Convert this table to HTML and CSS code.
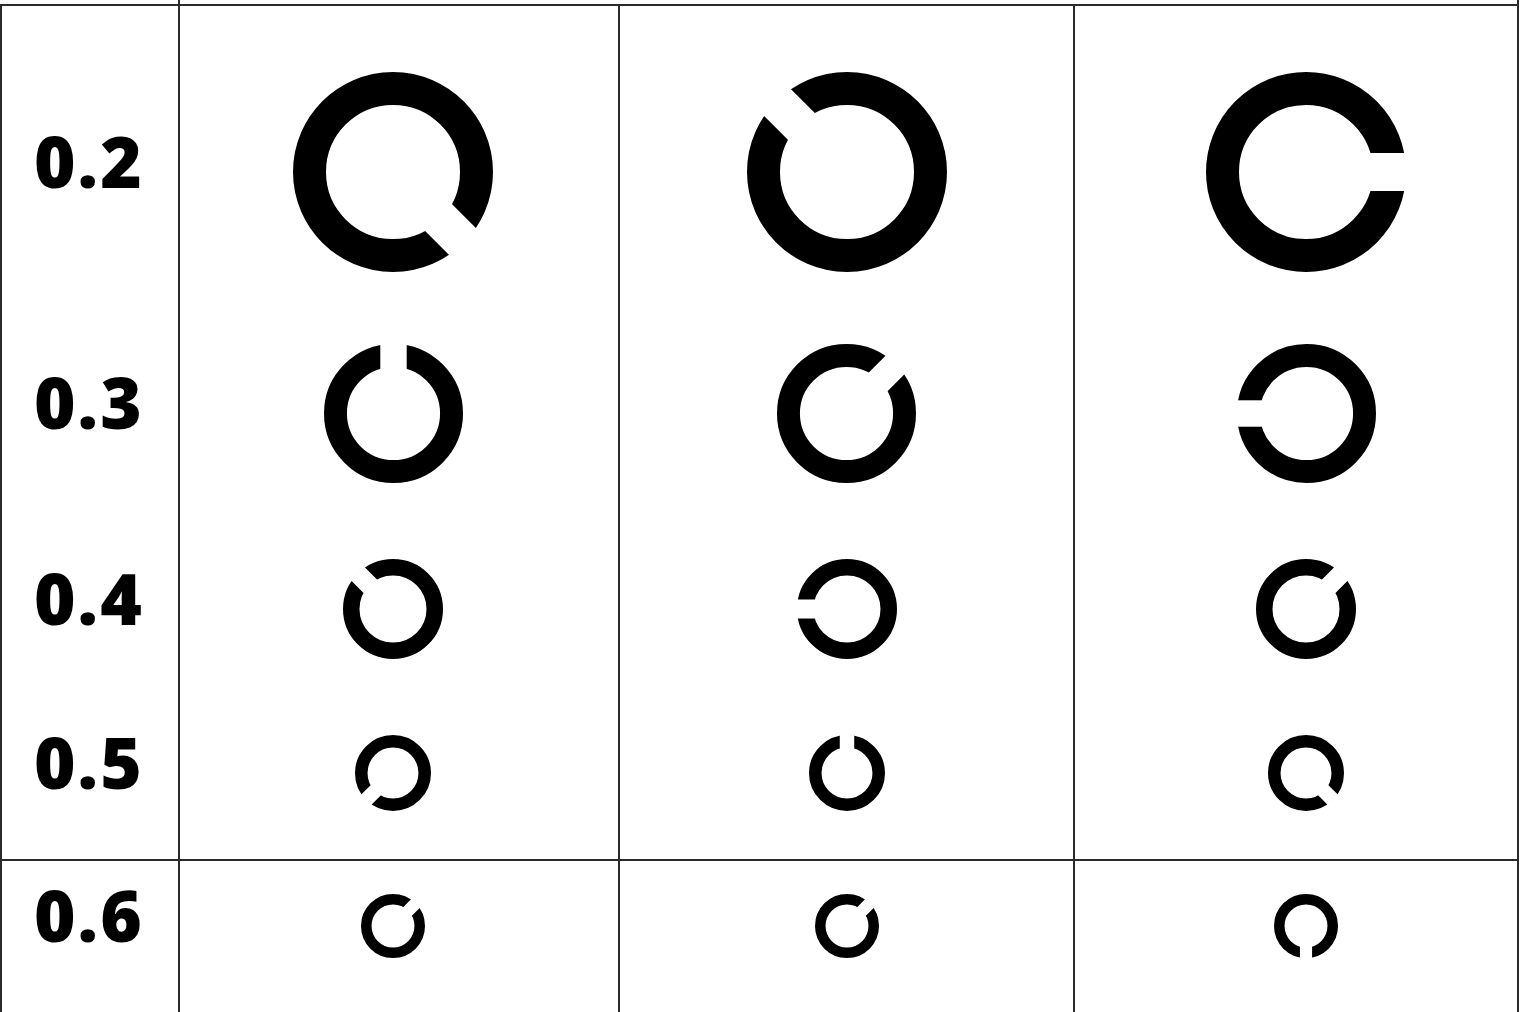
FILE: index.html
```html
<!DOCTYPE html>
<html lang="en">
<head>
    <meta charset="UTF-8">
    <title>Landolt C chart</title>
    <link rel="stylesheet" href="styles.css">
</head>
<body>

<div id="chart">
    <!-- bottom edge of the header row, cut off by the page -->
    <div class="head-strip">
        <div class="head-cell"></div>
        <div class="head-cell wide"></div>
    </div>

    <div class="section upper">
        <div class="col labels">
            <div class="label lv2">0.2</div>
            <div class="label lv3">0.3</div>
            <div class="label lv4">0.4</div>
            <div class="label lv5">0.5</div>
        </div>
        <div class="col rings first">
            <svg class="ring lv2" viewBox="-100 -100 200 200"><use href="#c" transform="rotate(45)"/></svg>
            <svg class="ring lv3" viewBox="-100 -100 200 200"><use href="#c" transform="rotate(-90)"/></svg>
            <svg class="ring lv4" viewBox="-100 -100 200 200"><use href="#c" transform="rotate(-135)"/></svg>
            <svg class="ring lv5" viewBox="-100 -100 200 200"><use href="#c" transform="rotate(135)"/></svg>
        </div>
        <div class="col rings">
            <svg class="ring lv2" viewBox="-100 -100 200 200"><use href="#c" transform="rotate(-135)"/></svg>
            <svg class="ring lv3" viewBox="-100 -100 200 200"><use href="#c" transform="rotate(-45)"/></svg>
            <svg class="ring lv4" viewBox="-100 -100 200 200"><use href="#c" transform="rotate(180)"/></svg>
            <svg class="ring lv5" viewBox="-100 -100 200 200"><use href="#c" transform="rotate(-90)"/></svg>
        </div>
        <div class="col rings last">
            <svg class="ring lv2" viewBox="-100 -100 200 200"><use href="#c"/></svg>
            <svg class="ring lv3" viewBox="-100 -100 200 200"><use href="#c" transform="rotate(180)"/></svg>
            <svg class="ring lv4" viewBox="-100 -100 200 200"><use href="#c" transform="rotate(-45)"/></svg>
            <svg class="ring lv5" viewBox="-100 -100 200 200"><use href="#c" transform="rotate(45)"/></svg>
        </div>
    </div>

    <div class="section lower">
        <div class="col labels">
            <div class="label lv6">0.6</div>
        </div>
        <div class="col rings first">
            <svg class="ring lv6" viewBox="-100 -100 200 200"><use href="#c" transform="rotate(-45)"/></svg>
        </div>
        <div class="col rings">
            <svg class="ring lv6" viewBox="-100 -100 200 200"><use href="#c" transform="rotate(-45)"/></svg>
        </div>
        <div class="col rings last">
            <svg class="ring lv6" viewBox="-100 -100 200 200"><use href="#c" transform="rotate(90)"/></svg>
        </div>
    </div>
</div>

<!-- one Landolt ring, gap pointing right; each use rotates it -->
<svg class="defs">
    <defs>
        <g id="c">
            <circle cx="0" cy="0" r="83.5" fill="none" stroke="#000" stroke-width="33"/>
            <rect x="0" y="-19" width="101" height="38" fill="#fff"/>
        </g>
    </defs>
</svg>

</body>
</html>
```

FILE: styles.css
```css
* {
    box-sizing: border-box;
}
body {
    margin: 0;
    background-color: #fff;
    font-family: "Open Sans", "Liberation Sans", Arial, sans-serif;
    overflow: hidden;
}
#chart {
    width: 1519px;
}
.head-strip {
    display: flex;
    height: 4px;
}
.head-cell {
    width: 178px;
}
.head-cell.wide {
    flex: 1;
    border-left: 2px solid #2a2a2a;
    border-right: 2px solid #2a2a2a;
}
.section {
    display: grid;
    grid-template-columns: 178px 440px 455px 446px;
    border-top: 2px solid #2a2a2a;
}
.upper {
    height: 855px;
}
.lower {
    height: 170px;
}
.col {
    display: flex;
    flex-direction: column;
    border-left: 2px solid #2a2a2a;
}
.col.last {
    border-right: 2px solid #2a2a2a;
}
.rings {
    align-items: center;
}
.rings.first {
    padding-right: 12px;
}
.rings.last {
    padding-left: 20px;
}
.labels {
    padding-left: 32px;
}
.label {
    display: flex;
    align-items: center;
    padding-bottom: 24px;
    font-size: 71px;
    font-weight: 800;
    line-height: 1;
    letter-spacing: 2px;
    color: #000;
}
.ring {
    display: block;
}
.lv2 {
    height: 200px;
    margin-top: 66px;
}
.lv3 {
    height: 139px;
    margin-top: 72px;
}
.lv4 {
    height: 100px;
    margin-top: 76px;
}
.lv5 {
    height: 76px;
    margin-top: 76px;
}
.lv6 {
    height: 64px;
    margin-top: 33px;
}
.ring.lv2 { width: 200px; }
.ring.lv3 { width: 139px; }
.ring.lv4 { width: 100px; }
.ring.lv5 { width: 76px; }
.ring.lv6 { width: 64px; }
.defs {
    display: block;
    width: 0;
    height: 0;
}
```
